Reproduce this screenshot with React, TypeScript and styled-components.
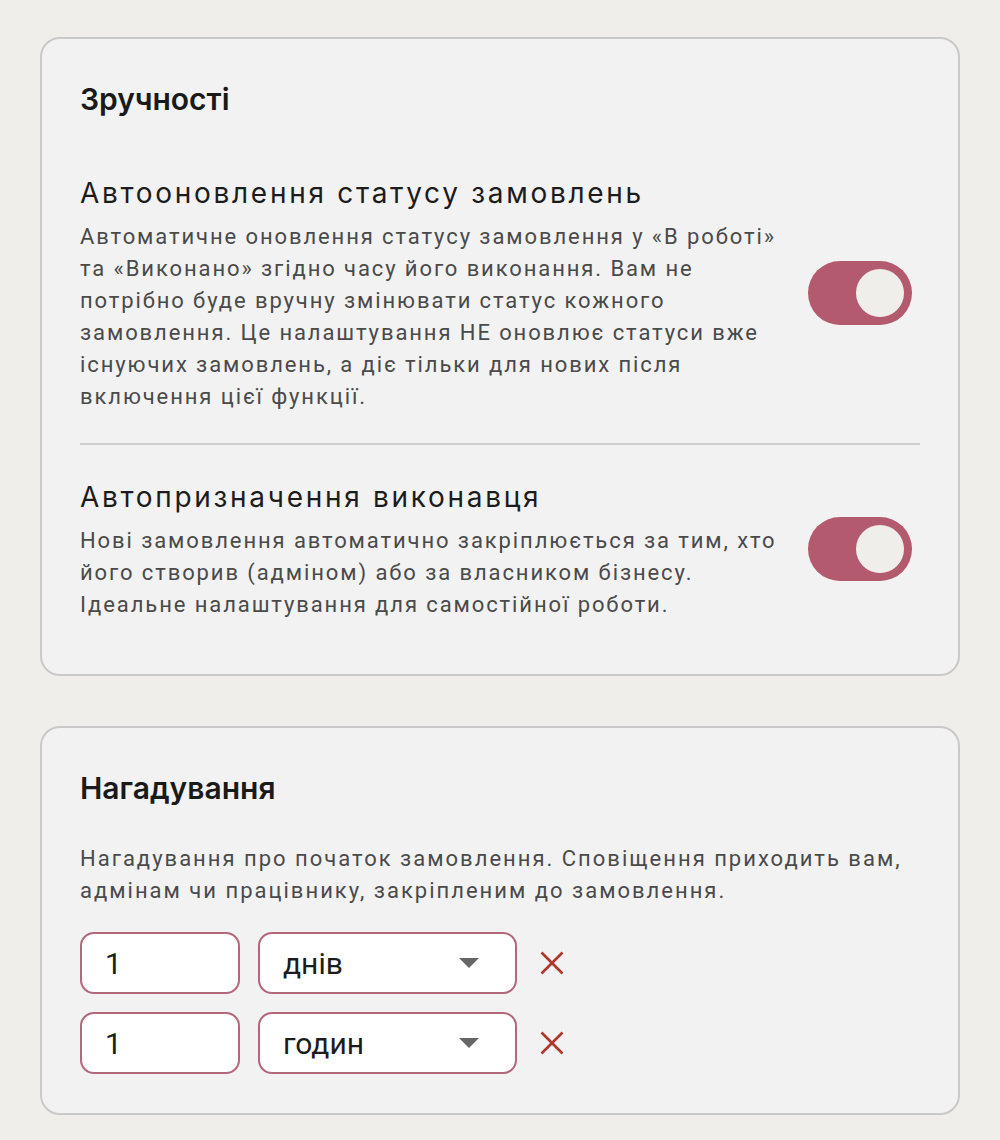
import React, { useState } from "react";
import styled, { createGlobalStyle } from "styled-components";

const GlobalStyle = createGlobalStyle`
  body {
    margin: 0;
    background: #efeeeb;
    font-family: Roboto, "Noto Sans", sans-serif;
  }
`;

const Page = styled.div`
  display: flex;
  flex-direction: column;
  gap: 50px;
  padding: 37px 40px 24px 40px;
`;

const Card = styled.section<{ $bottom: number }>`
  background: #f2f2f2;
  border: 2px solid #c9c9c9;
  border-radius: 20px;
  padding: 42px 38px ${(p) => p.$bottom}px 38px;
`;

const CardTitle = styled.h2`
  margin: 0;
  font-family: Inter, "Noto Sans", sans-serif;
  font-weight: 600;
  font-size: 30px;
  line-height: 36px;
  color: #1a1a1a;
`;

const SettingRow = styled.div<{ $first?: boolean }>`
  display: flex;
  align-items: center;
  gap: 24px;
  padding: ${(p) => (p.$first ? "56px 8px 30px 0" : "32px 8px 0 0")};
  border-bottom: ${(p) => (p.$first ? "2px solid #cfcfcf" : "none")};
`;

const SettingText = styled.div`
  flex: 1;
`;

const SettingName = styled.div`
  font-family: Inter, "Noto Sans", sans-serif;
  font-size: 28px;
  line-height: 40px;
  letter-spacing: 2.7px;
  color: #1c1c1c;
`;

const Description = styled.p`
  margin: 8px 0 0 0;
  font-size: 22px;
  line-height: 32px;
  letter-spacing: 1.9px;
  color: #4a4a4a;
  max-width: 708px;
`;

const Track = styled.button<{ $on: boolean }>`
  flex: none;
  width: 104px;
  height: 64px;
  border: none;
  border-radius: 32px;
  padding: 8px;
  background: ${(p) => (p.$on ? "#b35a6f" : "#c9c9c9")};
  display: flex;
  justify-content: ${(p) => (p.$on ? "flex-end" : "flex-start")};
  cursor: pointer;
`;

const Knob = styled.span`
  width: 48px;
  height: 48px;
  border-radius: 50%;
  background: #f0eeea;
`;

const Intro = styled.p`
  margin: 37px 0 25px 0;
  font-size: 22px;
  line-height: 32px;
  letter-spacing: 2px;
  color: #4a4a4a;
  white-space: nowrap;
`;

const ReminderList = styled.div`
  display: flex;
  flex-direction: column;
  gap: 18px;
`;

const ReminderRow = styled.div`
  display: flex;
  align-items: center;
  gap: 18px;
`;

const Field = styled.div<{ $width: number }>`
  box-sizing: border-box;
  width: ${(p) => p.$width}px;
  height: 62px;
  border: 2px solid #b3677a;
  border-radius: 14px;
  background: #ffffff;
  display: flex;
  align-items: center;
  justify-content: space-between;
  padding: 0 36px 0 23px;
  font-size: 30px;
  color: #1c1c1c;
`;

const Caret = styled.span`
  width: 0;
  height: 0;
  border-left: 10px solid transparent;
  border-right: 10px solid transparent;
  border-top: 10px solid #666666;
`;

const RemoveButton = styled.button`
  border: none;
  background: none;
  padding: 0 0 0 5px;
  display: flex;
  cursor: pointer;
`;

type Setting = { name: string; text: string };

const settings: Setting[] = [
  {
    name: "Автооновлення статусу замовлень",
    text:
      "Автоматичне оновлення статусу замовлення у «В роботі» та «Виконано» згідно часу його виконання. Вам не потрібно буде вручну змінювати статус кожного замовлення. Це налаштування НЕ оновлює статуси вже існуючих замовлень, а діє тільки для нових після включення цієї функції.",
  },
  {
    name: "Автопризначення виконавця",
    text:
      "Нові замовлення автоматично закріплюється за тим, хто його створив (адміном) або за власником бізнесу. Ідеальне налаштування для самостійної роботи.",
  },
];

const reminders = [
  { amount: "1", unit: "днів" },
  { amount: "1", unit: "годин" },
];

const Toggle = () => {
  const [on, setOn] = useState(true);
  return (
    <Track $on={on} onClick={() => setOn(!on)}>
      <Knob />
    </Track>
  );
};

const App = () => {
  return (
    <>
      <GlobalStyle />
      <Page>
        <Card $bottom={53}>
          <CardTitle>Зручності</CardTitle>
          {settings.map((s, i) => (
            <SettingRow key={s.name} $first={i === 0}>
              <SettingText>
                <SettingName>{s.name}</SettingName>
                <Description>{s.text}</Description>
              </SettingText>
              <Toggle />
            </SettingRow>
          ))}
        </Card>

        <Card $bottom={39}>
          <CardTitle>Нагадування</CardTitle>
          <Intro>
            Нагадування про початок замовлення. Сповіщення приходить вам,
            <br />
            адмінам чи працівнику, закріпленим до замовлення.
          </Intro>
          <ReminderList>
            {reminders.map((r, i) => (
              <ReminderRow key={i}>
                <Field $width={160}>{r.amount}</Field>
                <Field $width={259}>
                  {r.unit}
                  <Caret />
                </Field>
                <RemoveButton>
                  <svg width="24" height="24" viewBox="0 0 24 24">
                    <path
                      d="M1.5 1.5 L22.5 22.5 M22.5 1.5 L1.5 22.5"
                      stroke="#b0352f"
                      strokeWidth="2.6"
                      fill="none"
                    />
                  </svg>
                </RemoveButton>
              </ReminderRow>
            ))}
          </ReminderList>
        </Card>
      </Page>
    </>
  );
};

export default App;
